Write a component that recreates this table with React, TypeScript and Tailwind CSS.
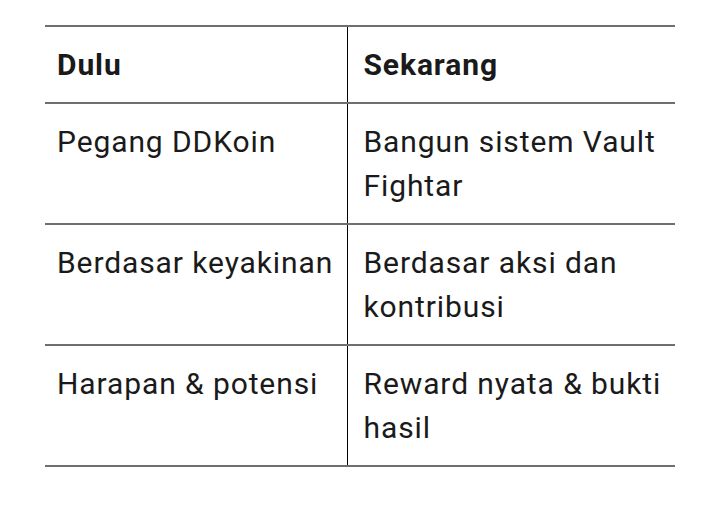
const rows = [
  ["Pegang DDKoin", "Bangun sistem Vault Fightar"],
  ["Berdasar keyakinan", "Berdasar aksi dan kontribusi"],
  ["Harapan & potensi", "Reward nyata & bukti hasil"],
]

export default function App() {
  return (
    <div className="w-[720px] h-[524px] bg-white pt-[25px] pl-[45px] font-['Roboto',sans-serif]">
      <table className="w-[630px] border-collapse text-[#1a1a1a] text-[30px] leading-[44px] tracking-[0.03em]">
        <thead>
          <tr className="border-y-2 border-[#6f6f6f]">
            <th className="w-[302px] border-r border-black text-left font-bold pl-3 pr-3 pt-4 pb-[15px]">Dulu</th>
            <th className="text-left font-bold pl-4 pr-3 pt-4 pb-[15px]">Sekarang</th>
          </tr>
        </thead>
        <tbody>
          {rows.map((r) => (
            <tr key={r[0]} className="border-b-2 border-[#6f6f6f]">
              <td className="border-r border-black align-top pl-3 pr-2 pt-4 pb-[15px] h-[121px]">{r[0]}</td>
              <td className="align-top pl-4 pr-3 pt-4 pb-[15px]">{r[1]}</td>
            </tr>
          ))}
        </tbody>
      </table>
    </div>
  )
}
